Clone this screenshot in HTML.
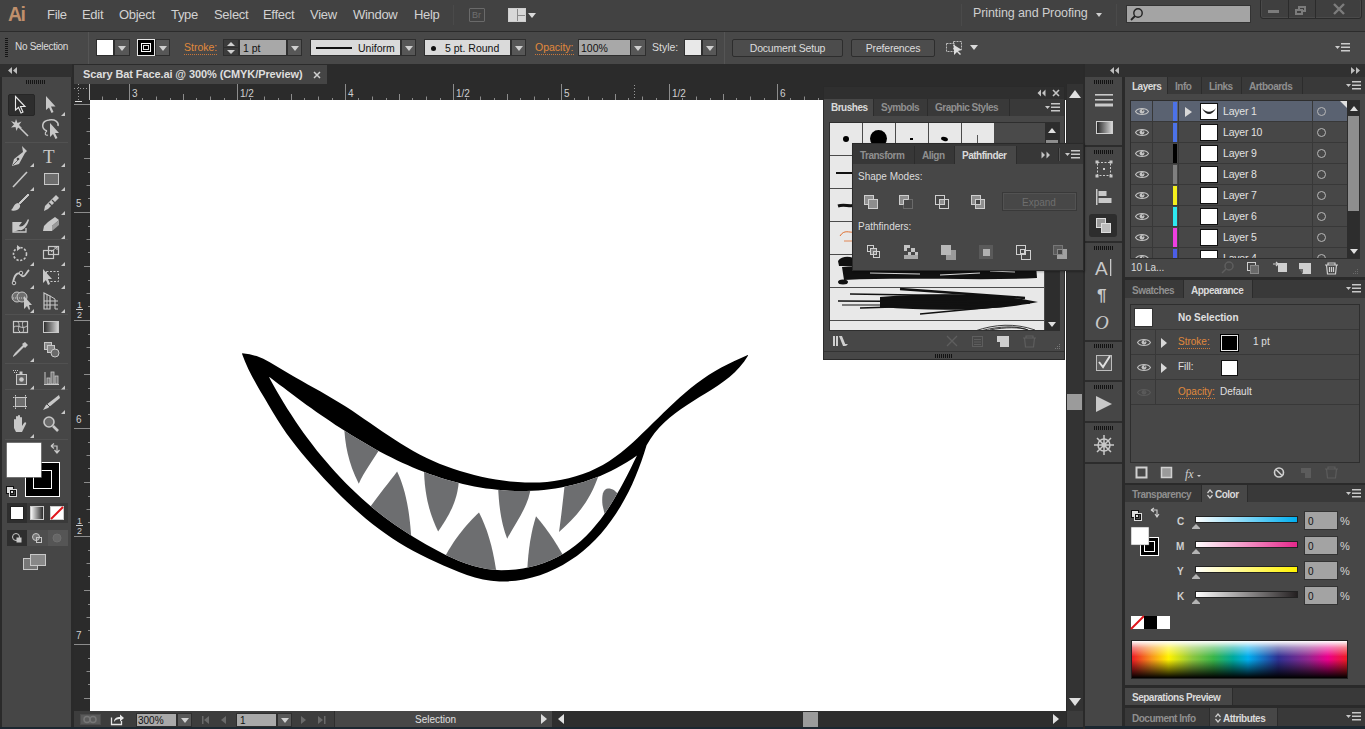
<!DOCTYPE html>
<html><head><meta charset="utf-8">
<style>
*{margin:0;padding:0;box-sizing:border-box}
html,body{width:1365px;height:729px;overflow:hidden;background:#2a2a2a;font-family:"Liberation Sans",sans-serif;color:#d6d6d6;font-size:11px}
.a{position:absolute}
.t{position:absolute;white-space:nowrap;line-height:1}
#menubar{left:0;top:0;width:1365px;height:31px;background:#424242}
#ctrl{left:0;top:31px;width:1365px;height:33px;background:#484848;border-top:1px solid #2c2c2c}
.dd{position:absolute;background:#575757;border:1px solid #2e2e2e}
.dd:after{content:"";position:absolute;left:50%;top:50%;margin-left:-4px;margin-top:-2px;border-left:4px solid transparent;border-right:4px solid transparent;border-top:5px solid #cfcfcf}
.mn{top:8px;font-size:13px;color:#d2d2d2;letter-spacing:-0.3px}
.orange{color:#e0893c;border-bottom:1px dotted #c9773a}
.btn{position:absolute;background:#4c4c4c;border:1px solid #2d2d2d;border-radius:2px;color:#dcdcdc;text-align:center;font-size:10.5px;letter-spacing:-0.2px}
.panel{position:absolute;background:#474747}
.hdr{position:absolute;background:#2e2e2e}
.tab{position:absolute;top:0;height:100%;color:#9a9a9a;font-size:11px;font-weight:bold;text-align:center;border-right:1px solid #3a3a3a}
.tab.on{background:#474747;color:#dcdcdc}
.grip{position:absolute;height:6px;background:repeating-linear-gradient(90deg,#151515 0 1px,transparent 1px 3px)}
</style></head><body>

<!-- MENU BAR -->
<div id="menubar" class="a">
  <div class="t" style="left:8px;top:3px;font-size:21px;font-weight:bold;color:#c0906c;letter-spacing:-1.5px;transform:scaleX(0.92);transform-origin:0 0">Ai</div>
  <div class="t mn" style="left:47px">File</div>
  <div class="t mn" style="left:82px">Edit</div>
  <div class="t mn" style="left:119px">Object</div>
  <div class="t mn" style="left:171px">Type</div>
  <div class="t mn" style="left:214px">Select</div>
  <div class="t mn" style="left:263px">Effect</div>
  <div class="t mn" style="left:310px">View</div>
  <div class="t mn" style="left:353px">Window</div>
  <div class="t mn" style="left:414px">Help</div>
  <div class="a" style="left:453px;top:5px;width:1px;height:20px;background:#2f2f2f;border-right:1px solid #4a4a4a"></div>
  <div class="a" style="left:469px;top:8px;width:16px;height:14px;border:1px solid #6a6a6a;border-radius:1px"><div class="t" style="left:2px;top:2px;font-size:9px;color:#6f6f6f">Br</div></div>
  <div class="a" style="left:508px;top:8px;width:18px;height:14px;border:1px solid #cfcfcf;background:#8a8a8a">
    <div class="a" style="left:0;top:0;width:8px;height:12px;background:#d8d8d8"></div>
    <div class="a" style="left:9px;top:0;width:7px;height:6px;background:#d8d8d8"></div>
    <div class="a" style="left:9px;top:7px;width:7px;height:5px;background:#d8d8d8"></div>
  </div>
  <div class="a" style="left:528px;top:13px;border-left:4px solid transparent;border-right:4px solid transparent;border-top:5px solid #dadada"></div>
  <div class="a" style="left:961px;top:4px;width:1px;height:22px;background:#2f2f2f;border-right:1px solid #4a4a4a"></div>
  <div class="t" style="left:973px;top:7px;font-size:12.5px;color:#cfcfcf;letter-spacing:-0.1px">Printing and Proofing</div>
  <div class="a" style="left:1096px;top:13px;border-left:3px solid transparent;border-right:3px solid transparent;border-top:4px solid #cfcfcf"></div>
  <div class="a" style="left:1116px;top:4px;width:1px;height:22px;background:#2f2f2f;border-right:1px solid #4a4a4a"></div>
  <div class="a" style="left:1126px;top:5px;width:125px;height:18px;background:#a4a4a4;border:1px solid #333">
    <svg class="a" style="left:2px;top:1px" width="16" height="15"><circle cx="9" cy="6" r="4.2" fill="none" stroke="#222" stroke-width="1.4"/><line x1="6" y1="9" x2="2" y2="13" stroke="#222" stroke-width="1.8"/></svg>
  </div>
  <div class="a" style="left:1260px;top:-2px;width:102px;height:21px;border:1px solid #2b2b2b;border-radius:3px;background:#3f3f3f;box-shadow:inset 0 0 0 1px #4a4a4a"></div>
  <div class="a" style="left:1288px;top:0;width:1px;height:19px;background:#2b2b2b"></div>
  <div class="a" style="left:1315px;top:0;width:1px;height:19px;background:#2b2b2b"></div>
  <div class="a" style="left:1268px;top:10px;width:11px;height:3px;background:#7c7c7c"></div>
  <div class="a" style="left:1298px;top:6px;width:8px;height:6px;border:2px solid #7c7c7c"></div>
  <div class="a" style="left:1295px;top:9px;width:8px;height:6px;border:2px solid #7c7c7c;background:#3f3f3f"></div>
  <svg class="a" style="left:1333px;top:3px" width="12" height="12"><path d="M1,1 L11,11 M11,1 L1,11" stroke="#7c7c7c" stroke-width="2.4"/></svg>
</div>

<!-- CONTROL BAR -->
<div id="ctrl" class="a">
  <div class="grip" style="left:5px;top:6px;width:3px;height:19px;background:repeating-linear-gradient(180deg,#151515 0 1px,transparent 1px 2px)"></div>
  <div class="t" style="left:15px;top:10px;font-size:10px;letter-spacing:-0.3px;color:#dcdcdc">No Selection</div>
  <div class="a" style="left:88px;top:0;width:1px;height:32px;background:#3a3a3a;border-right:1px solid #555"></div>
  <div class="a" style="left:96px;top:7px;width:18px;height:17px;background:#fff;border:1px solid #2e2e2e"></div>
  <div class="dd" style="left:114px;top:7px;width:16px;height:17px"></div>
  <div class="a" style="left:137px;top:7px;width:18px;height:17px;background:#000;border:1px solid #e6e6e6"><div class="a" style="left:3px;top:3px;width:10px;height:9px;border:1px solid #fff"></div><div class="a" style="left:5px;top:5px;width:6px;height:5px;border:1px solid #ddd;background:#000"></div></div>
  <div class="dd" style="left:155px;top:7px;width:15px;height:17px"></div>
  <div class="t orange" style="left:184px;top:10px;font-size:10.5px;padding-bottom:1px">Stroke:</div>
  <div class="a" style="left:223px;top:7px;width:16px;height:17px;background:#3c3c3c;border:1px solid #2e2e2e">
    <div class="a" style="left:3px;top:2px;border-left:4px solid transparent;border-right:4px solid transparent;border-bottom:4px solid #cfcfcf"></div>
    <div class="a" style="left:0;top:7px;width:14px;height:1px;background:#2e2e2e"></div>
    <div class="a" style="left:3px;top:10px;border-left:4px solid transparent;border-right:4px solid transparent;border-top:4px solid #cfcfcf"></div>
  </div>
  <div class="a" style="left:239px;top:7px;width:48px;height:17px;background:#a8a8a8;border:1px solid #2e2e2e"><div class="t" style="left:3px;top:3px;font-size:10.5px;color:#111">1 pt</div></div>
  <div class="dd" style="left:287px;top:7px;width:15px;height:17px"></div>
  <div class="a" style="left:310px;top:7px;width:91px;height:17px;background:#dadada;border:1px solid #2e2e2e">
    <div class="a" style="left:5px;top:7px;width:36px;height:2px;background:#111"></div>
    <div class="t" style="left:47px;top:3px;font-size:10.5px;color:#111">Uniform</div>
  </div>
  <div class="dd" style="left:401px;top:7px;width:15px;height:17px"></div>
  <div class="a" style="left:424px;top:7px;width:87px;height:17px;background:#dadada;border:1px solid #2e2e2e">
    <div class="a" style="left:6px;top:6px;width:5px;height:5px;border-radius:50%;background:#111"></div>
    <div class="t" style="left:20px;top:3px;font-size:10.5px;color:#111">5 pt. Round</div>
  </div>
  <div class="dd" style="left:511px;top:7px;width:15px;height:17px"></div>
  <div class="t orange" style="left:535px;top:10px;font-size:10.5px;padding-bottom:1px">Opacity:</div>
  <div class="a" style="left:578px;top:7px;width:53px;height:17px;background:#a8a8a8;border:1px solid #2e2e2e"><div class="t" style="left:2px;top:3px;font-size:10.5px;color:#111">100%</div></div>
  <div class="dd" style="left:630px;top:7px;width:16px;height:17px"></div>
  <div class="t" style="left:652px;top:10px;font-size:10.5px;color:#dcdcdc">Style:</div>
  <div class="a" style="left:684px;top:7px;width:18px;height:17px;background:#e8e8e8;border:1px solid #2e2e2e"></div>
  <div class="dd" style="left:702px;top:7px;width:15px;height:17px"></div>
  <div class="a" style="left:724px;top:0;width:1px;height:32px;background:#3a3a3a;border-right:1px solid #555"></div>
  <div class="btn" style="left:732px;top:7px;width:111px;height:18px;line-height:16px">Document Setup</div>
  <div class="btn" style="left:851px;top:7px;width:84px;height:18px;line-height:16px">Preferences</div>
  <svg class="a" style="left:945px;top:8px" width="22" height="16"><rect x="1.5" y="3.5" width="8" height="8" fill="none" stroke="#bbb" stroke-dasharray="2 1"/><rect x="8.5" y="1.5" width="8" height="8" fill="none" stroke="#bbb" stroke-dasharray="2 1"/><path d="M9,5 L9,15 L12,12 L15,15 L16,14 L13,11 L17,10 Z" fill="#ddd"/></svg>
  <div class="a" style="left:970px;top:13px;border-left:4px solid transparent;border-right:4px solid transparent;border-top:5px solid #dadada"></div>
  <svg class="a" style="left:1335px;top:10px" width="16" height="12"><path d="M0,4 L5,4 L2.5,7Z" fill="#ccc"/><rect x="6" y="1" width="9" height="1.5" fill="#ccc"/><rect x="6" y="4.5" width="9" height="1.5" fill="#ccc"/><rect x="6" y="8" width="9" height="1.5" fill="#ccc"/></svg>
</div>

<!-- TOOLS PANEL -->
<div class="a" style="left:0;top:64px;width:74px;height:665px;background:#2a2a2a"></div>
<div class="hdr" style="left:0;top:64px;width:72px;height:13px;background:#303030"></div>
<svg class="a" style="left:8px;top:67px" width="10" height="7"><path d="M4,0 L0,3.5 L4,7Z M9,0 L5,3.5 L9,7Z" fill="#bdbdbd"/></svg>
<div class="panel" style="left:2px;top:77px;width:69px;height:652px;background:#464646"></div>
<div class="grip" style="left:26px;top:80px;width:19px;height:4px;background:repeating-linear-gradient(90deg,#151515 0 1px,transparent 1px 2px)"></div>
<!--TOOLS-->
<div class="a" style="left:8px;top:94px;width:27px;height:22px;background:#2d2d2d;border:1px solid #262626;border-radius:2px"></div>
<div class="a" style="left:5px;top:142px;width:63px;height:1px;background:#3a3a3a;border-bottom:1px solid #515151"></div>
<div class="a" style="left:5px;top:239px;width:63px;height:1px;background:#3a3a3a;border-bottom:1px solid #515151"></div>
<div class="a" style="left:5px;top:314px;width:63px;height:1px;background:#3a3a3a;border-bottom:1px solid #515151"></div>
<div class="a" style="left:5px;top:363px;width:63px;height:1px;background:#3a3a3a;border-bottom:1px solid #515151"></div>
<div class="a" style="left:5px;top:389px;width:63px;height:1px;background:#3a3a3a;border-bottom:1px solid #515151"></div>
<div class="a" style="left:5px;top:439px;width:63px;height:1px;background:#3a3a3a;border-bottom:1px solid #515151"></div>
<svg class="a" style="left:0;top:0" width="74" height="600"><g fill="#c8c8c8" stroke="none"><path d="M65,112 V116 H61Z"/><path d="M34,163 V167 H30Z"/><path d="M65,163 V167 H61Z"/><path d="M34,187 V191 H30Z"/><path d="M65,187 V191 H61Z"/><path d="M65,211 V215 H61Z"/><path d="M65,235 V239 H61Z"/><path d="M34,262 V266 H30Z"/><path d="M65,262 V266 H61Z"/><path d="M34,285 V289 H30Z"/><path d="M65,285 V289 H61Z"/><path d="M34,309 V313 H30Z"/><path d="M65,309 V313 H61Z"/><path d="M34,358 V362 H30Z"/><path d="M34,385.5 V389.5 H30Z"/><path d="M65,385.5 V389.5 H61Z"/><path d="M65,410 V414 H61Z"/><path d="M34,434 V438 H30Z"/></g><path d="M15.5,96.5 V110 L18.5,107.5 L21,113 L23,112 L20.5,106.5 L25,106.5Z" fill="#2d2d2d" stroke="#e8e8e8" stroke-width="1.1"/><path d="M46,96 V110 L49,107.5 L51.5,113 L53.5,112 L51,106.5 L55.5,106.5Z" fill="#c8c8c8"/><g stroke="#c8c8c8" stroke-width="1.6"><path d="M17,125 L28,136"/></g><path d="M16,119 L17.5,123 L21.5,121.5 L19,125 L22,128 L18,127.5 L16.5,131 L15.5,127 L11,127.5 L14,124.5 L11,121 L15,122.5Z" fill="#c8c8c8"/><path d="M47,131 C41,129 41,121 49,120 C55,119 59,122 58,126" fill="none" stroke="#c8c8c8" stroke-width="1.5"/><path d="M47,131 C44,133 45,136 48,135" fill="none" stroke="#c8c8c8" stroke-width="1.1"/><path d="M50,123 V137 L53,134 L55.5,139 L57.5,138 L55,133 L59,133Z" fill="#c8c8c8"/><path d="M22,146 L27,151 L25,153 L19,164 L12,166 L14,159 L23,152Z" fill="#c8c8c8"/><circle cx="18" cy="159" r="1.3" fill="#474747"/><path d="M13,165 L18,160" stroke="#474747" stroke-width="0.8"/><text x="43" y="163" font-family="Liberation Serif" font-size="19" fill="#c8c8c8">T</text><path d="M13,187 L27,172" stroke="#c8c8c8" stroke-width="1.6"/><rect x="44.5" y="173.5" width="14" height="11" fill="#6d6d6d" stroke="#c8c8c8"/><path d="M28,194 L29,195 L20,204 L19,203Z" fill="#c8c8c8" stroke="#c8c8c8"/><path d="M18,203 C21,204 21,208 17,210 C15,211 12,211 11,210 C14,208 13,204 18,203Z" fill="#c8c8c8"/><path d="M56,195 L59,198 L48,209 L44,211 L45,206Z" fill="#c8c8c8"/><path d="M49,203 L52,206 M52,200 L55,203" stroke="#474747" stroke-width="1.2"/><path d="M13,222 H22 L19,226 C22,228 25,225 28,219 L29,220 C27,226 24,231 19,230 L13,232Z" fill="#c8c8c8"/><path d="M13,222 V232 H26 V228" fill="none" stroke="#c8c8c8" stroke-width="1.3"/><path d="M48,222 L55,217 L59,220 L52,226 H44Z" fill="#c8c8c8"/><path d="M44,226 H52 V231 H43Z" fill="#c8c8c8"/><path d="M52,226 L59,220 V225 L52,231Z" fill="#9a9a9a"/><circle cx="20" cy="254" r="6.5" fill="none" stroke="#c8c8c8" stroke-width="1.6" stroke-dasharray="2.2 1.6"/><path d="M17,245 L21,248 L17,251Z" fill="#c8c8c8"/><rect x="43.5" y="250.5" width="10" height="8" fill="none" stroke="#c8c8c8" stroke-width="1.2"/><rect x="48.5" y="246.5" width="10" height="8" fill="none" stroke="#c8c8c8" stroke-width="1.2"/><path d="M51,252 L57,247 M54,247 H57 V250" stroke="#c8c8c8" stroke-width="1" fill="none"/><path d="M13,283 C14,275 18,271 21,275 C24,279 26,273 29,270" fill="none" stroke="#c8c8c8" stroke-width="1.8"/><circle cx="14" cy="283" r="1.8" fill="#474747" stroke="#c8c8c8"/><circle cx="21" cy="273" r="1.8" fill="#474747" stroke="#c8c8c8"/><rect x="46.5" y="271.5" width="12" height="10" fill="none" stroke="#c8c8c8" stroke-dasharray="2 1.5"/><path d="M43,269 V283 L46,280 L48,285 L50,284 L48,279 L52,279Z" fill="#c8c8c8"/><circle cx="17" cy="297" r="5" fill="#6e6e6e" stroke="#c8c8c8"/><circle cx="22" cy="297" r="5" fill="#6e6e6e" stroke="#c8c8c8"/><path d="M13,298 H24" stroke="#c8c8c8" stroke-dasharray="1 1"/><path d="M24,296 V309 L27,306 L29,310 L30,309 L29,305 L32,305Z" fill="#c8c8c8"/><path d="M44,293 L50,296 V309 H44Z" fill="none" stroke="#c8c8c8" stroke-width="1.2"/><path d="M50,296 L55,299 V309 M44,301 H58 M44,305 H58 M47,294 V309 M55,309 H58" fill="none" stroke="#c8c8c8" stroke-width="1"/><rect x="13.5" y="321.5" width="14" height="11" fill="none" stroke="#c8c8c8" stroke-width="1.2"/><path d="M14,327 C18,324 22,330 27,326 M18,322 C21,326 16,329 20,332 M23,322 C21,325 25,329 23,332" fill="none" stroke="#c8c8c8"/><defs><linearGradient id="tg" x1="0" x2="1"><stop offset="0" stop-color="#2a2a2a"/><stop offset="1" stop-color="#d8d8d8"/></linearGradient></defs><rect x="43.5" y="321.5" width="15" height="11" fill="url(#tg)" stroke="#c8c8c8"/><path d="M25,342 L28,345 L25,348 L24,347 L16,355 L13,357 L13,356 L15,353 L23,345 L22,344Z" fill="#c8c8c8"/><rect x="44.5" y="342.5" width="7" height="7" fill="#888" stroke="#c8c8c8"/><rect x="47.5" y="345.5" width="7" height="7" fill="#888" stroke="#c8c8c8"/><circle cx="55" cy="353" r="4" fill="#6a6a6a" stroke="#c8c8c8"/><g fill="#c8c8c8"><rect x="13" y="370" width="1" height="1"/><rect x="15" y="370" width="1" height="1"/><rect x="17" y="370" width="1" height="1"/><rect x="14" y="372" width="1" height="1"/><rect x="16" y="372" width="1" height="1"/></g><rect x="19.5" y="371.5" width="3" height="3" fill="#c8c8c8"/><rect x="16.5" y="374.5" width="10" height="10" fill="#5e5e5e" stroke="#c8c8c8"/><circle cx="21.5" cy="379.5" r="2.3" fill="#c8c8c8"/><path d="M44,384.5 H59 M45,372 V384" stroke="#c8c8c8" stroke-width="1"/><rect x="47" y="378" width="3" height="6" fill="#777" stroke="#c8c8c8" stroke-width="0.8"/><rect x="51" y="372" width="3" height="12" fill="#777" stroke="#c8c8c8" stroke-width="0.8"/><rect x="55" y="376" width="3" height="8" fill="#777" stroke="#c8c8c8" stroke-width="0.8"/><rect x="15.5" y="397.5" width="10" height="9" fill="#6e6e6e" stroke="#c8c8c8"/><path d="M13,397.5 H28 M13,406.5 H28 M15.5,395 V409 M25.5,395 V409" stroke="#c8c8c8" stroke-dasharray="1.5 1"/><path d="M59,395 L46,405 L43,410 L48,408 L60,398Z" fill="#c8c8c8"/><path d="M47,404 L50,407" stroke="#474747"/><path d="M14,428 V420 C14,418.5 16,418.5 16,420 V425 V417 C16,415.5 18,415.5 18,417 V424 V416 C18,414.5 20,414.5 20,416 V424 V418 C20,416.5 22,416.5 22,418 V426 L24,423 C25,421.5 27,422.5 26,424 L22,432 H16Z" fill="#c8c8c8"/><circle cx="49" cy="422" r="5" fill="#6a6a6a" stroke="#c8c8c8" stroke-width="1.6"/><path d="M53,426 L58,431" stroke="#c8c8c8" stroke-width="2.6"/><rect x="25.5" y="462.5" width="34" height="34" fill="#000" stroke="#fff"/><rect x="33.5" y="470.5" width="18" height="18" fill="none" stroke="#fff"/><rect x="6.5" y="442.5" width="35" height="35" fill="#fff" stroke="#444" stroke-width="0.5"/><path d="M51,446 L54,443.5 M51,446 L54,448.5 M51,446 H57 V452 M54.5,450 L57,453 L59.5,450" fill="none" stroke="#c8c8c8" stroke-width="1.2"/><rect x="6.5" y="486.5" width="7" height="7" fill="#ddd" stroke="#111"/><rect x="9.5" y="489.5" width="7" height="7" fill="none" stroke="#ddd"/><rect x="10.5" y="490.5" width="5" height="5" fill="none" stroke="#111"/><rect x="7" y="503" width="61" height="20" fill="#3a3a3a"/><rect x="7" y="503" width="20" height="20" fill="#2e2e2e"/><rect x="10.5" y="506.5" width="13" height="13" fill="#fff" stroke="#222"/><defs><linearGradient id="tg2" x1="0" x2="1"><stop offset="0" stop-color="#fff"/><stop offset="1" stop-color="#222"/></linearGradient></defs><rect x="30.5" y="506.5" width="13" height="13" fill="url(#tg2)" stroke="#ccc"/><rect x="50.5" y="506.5" width="13" height="13" fill="#fff" stroke="#ccc"/><path d="M51,519 L63,507" stroke="#e0151b" stroke-width="2"/><rect x="7" y="530" width="61" height="16" fill="#4e4e4e"/><rect x="7" y="530" width="20" height="16" fill="#2e2e2e"/><rect x="48" y="530" width="20" height="16" fill="#555"/><circle cx="16" cy="537" r="3.5" fill="none" stroke="#c8c8c8"/><rect x="16.5" y="537.5" width="5" height="5" fill="#c8c8c8"/><circle cx="36" cy="537" r="3.5" fill="#777" stroke="#c8c8c8"/><rect x="36.5" y="537.5" width="5" height="5" fill="none" stroke="#c8c8c8"/><circle cx="57" cy="538" r="4" fill="#666" stroke="#6e6e6e"/><rect x="23.5" y="558.5" width="14" height="11" fill="#777" stroke="#c8c8c8"/><rect x="30.5" y="554.5" width="15" height="11" fill="#888" stroke="#c8c8c8"/></svg>
<!--/TOOLS-->

<!-- DOC TAB BAR -->
<div class="a" style="left:74px;top:64px;width:1011px;height:20px;background:#2b2b2b"></div>
<div class="a" style="left:74px;top:65px;width:253px;height:19px;background:#454545">
  <div class="t" style="left:9px;top:4px;font-size:11px;font-weight:bold;letter-spacing:-0.1px;color:#dedede">Scary Bat Face.ai @ 300% (CMYK/Preview)</div>
  <svg class="a" style="left:239px;top:6px" width="8" height="8"><path d="M1,1 L7,7 M7,1 L1,7" stroke="#d0d0d0" stroke-width="1.5"/></svg>
</div>

<!-- RULERS -->
<div class="a" style="left:74px;top:84px;width:992px;height:16px;background:#2b2b2b"></div>
<div class="a" style="left:74px;top:100px;width:16px;height:611px;background:#2b2b2b"></div>
<div class="a" style="left:74px;top:84px;width:16px;height:16px;background:#2b2b2b"></div>
<svg class="a" style="left:74px;top:84px" width="16" height="16"><path d="M0,4.5H16 M4.5,0V16" stroke="#9a9a9a" stroke-dasharray="1 2"/><path d="M15.5,0V16" stroke="#bbb"/></svg>
<svg class="a" style="left:0;top:0" width="1365" height="729"><g stroke="#8c8c8c" stroke-width="1"><path d="M102.5,96.5V100 M116.5,98V100 M129.5,84V100 M142.5,98V100 M156.5,96.5V100 M170.5,98V100 M183.5,94V100 M196.5,98V100 M210.5,96.5V100 M224.5,98V100 M237.5,84V100 M250.5,98V100 M264.5,96.5V100 M278.5,98V100 M291.5,94V100 M304.5,98V100 M318.5,96.5V100 M332.5,98V100 M345.5,84V100 M358.5,98V100 M372.5,96.5V100 M386.5,98V100 M399.5,94V100 M412.5,98V100 M426.5,96.5V100 M440.5,98V100 M453.5,84V100 M466.5,98V100 M480.5,96.5V100 M494.5,98V100 M507.5,94V100 M520.5,98V100 M534.5,96.5V100 M548.5,98V100 M561.5,84V100 M574.5,98V100 M588.5,96.5V100 M602.5,98V100 M615.5,94V100 M628.5,98V100 M642.5,96.5V100 M656.5,98V100 M669.5,84V100 M682.5,98V100 M696.5,96.5V100 M710.5,98V100 M723.5,94V100 M736.5,98V100 M750.5,96.5V100 M764.5,98V100 M777.5,84V100 M790.5,98V100 M804.5,96.5V100 M818.5,98V100 M831.5,94V100 M844.5,98V100 M858.5,96.5V100 M872.5,98V100 M885.5,84V100 M898.5,98V100 M912.5,96.5V100 M926.5,98V100 M939.5,94V100 M952.5,98V100 M966.5,96.5V100 M980.5,98V100 M993.5,84V100 M1006.5,98V100 M1020.5,96.5V100 M1034.5,98V100 M1047.5,94V100 M1060.5,98V100"/></g><g fill="#cfcfcf" font-size="10" font-family="Liberation Sans"><text x="132" y="97">3</text><text x="240" y="97">1/2</text><text x="348" y="97">4</text><text x="456" y="97">1/2</text><text x="564" y="97">5</text><text x="672" y="97">1/2</text><text x="780" y="97">6</text><text x="888" y="97">1/2</text><text x="996" y="97">7</text></g><g stroke="#8c8c8c" stroke-width="1"><path d="M74,104.5H90 M88,118.5H90 M86.5,131.5H90 M88,144.5H90 M84,158.5H90 M88,172.5H90 M86.5,185.5H90 M88,198.5H90 M74,212.5H90 M88,226.5H90 M86.5,239.5H90 M88,252.5H90 M84,266.5H90 M88,280.5H90 M86.5,293.5H90 M88,306.5H90 M74,320.5H90 M88,334.5H90 M86.5,347.5H90 M88,360.5H90 M84,374.5H90 M88,388.5H90 M86.5,401.5H90 M88,414.5H90 M74,428.5H90 M88,442.5H90 M86.5,455.5H90 M88,468.5H90 M84,482.5H90 M88,496.5H90 M86.5,509.5H90 M88,522.5H90 M74,536.5H90 M88,550.5H90 M86.5,563.5H90 M88,576.5H90 M84,590.5H90 M88,604.5H90 M86.5,617.5H90 M88,630.5H90 M74,644.5H90 M88,658.5H90 M86.5,671.5H90 M88,684.5H90 M84,698.5H90"/></g><g fill="#cfcfcf" font-size="10" font-family="Liberation Sans"><text x="76" y="207">5</text><text x="77" y="308" font-size="9">1</text><path d="M76,309.5H83" stroke="#cfcfcf"/><text x="77" y="318" font-size="9">2</text><text x="76" y="423">6</text><text x="77" y="524" font-size="9">1</text><path d="M76,525.5H83" stroke="#cfcfcf"/><text x="77" y="534" font-size="9">2</text><text x="76" y="639">7</text></g></svg>

<div class="a" style="left:634px;top:85px;width:1px;height:15px;background:repeating-linear-gradient(180deg,#9a9a9a 0 1px,transparent 1px 3px)"></div>
<div class="a" style="left:823px;top:84px;width:243px;height:2px;background:#2b2b2b"></div>
<div class="a" style="left:75px;top:101px;width:7px;height:1px;background:#ddd"></div>
<!-- ARTBOARD -->
<div class="a" style="left:90px;top:100px;width:976px;height:611px;background:#fff"></div>
<!--MOUTH--><svg class="a" style="left:0;top:0" width="1365" height="729">
<defs><clipPath id="inn"><path d="M269.8,377.3 274.3,380.7 278.8,384.2 283.4,387.6 287.9,391.1 292.6,394.5 297.2,398.0 301.9,401.4 306.6,404.9 311.4,408.3 316.1,411.7 320.9,415.0 325.8,418.3 330.6,421.6 335.5,424.9 340.4,428.1 345.4,431.3 350.4,434.5 355.4,437.6 360.5,440.6 365.6,443.6 370.7,446.5 375.8,449.4 381.0,452.2 386.3,454.9 391.5,457.6 396.8,460.2 402.1,462.7 407.5,465.1 412.9,467.4 418.3,469.7 423.7,471.8 429.2,473.9 434.8,475.8 440.3,477.7 445.9,479.4 451.5,481.0 457.2,482.6 462.9,484.0 468.6,485.2 474.3,486.4 480.1,487.4 485.9,488.4 491.7,489.1 497.5,489.8 503.3,490.3 509.1,490.7 514.9,490.9 520.7,491.0 526.5,491.0 532.3,490.8 538.1,490.4 543.9,489.9 549.6,489.3 555.4,488.5 561.1,487.5 566.8,486.3 572.4,485.0 578.1,483.5 583.7,481.9 589.2,480.1 594.7,478.1 600.2,475.9 605.6,473.5 611.0,471.0 616.3,468.2 621.6,465.3 626.8,462.2 632.0,458.9 637.0,455.4 636.6,456.3 633.5,462.6 630.4,468.9 627.2,475.3 623.8,481.8 620.3,488.2 616.7,494.6 612.9,501.0 609.0,507.3 604.8,513.4 600.5,519.4 595.9,525.1 591.1,530.7 586.1,535.9 580.8,540.9 575.3,545.5 569.5,549.8 563.4,553.7 557.0,557.2 550.5,560.3 543.8,563.0 536.9,565.3 530.0,567.1 522.9,568.6 515.7,569.6 508.5,570.1 501.3,570.2 494.1,569.8 486.9,569.0 479.9,567.6 472.8,565.8 465.9,563.6 459.1,561.0 452.3,558.1 445.7,554.9 439.1,551.6 432.6,548.1 426.1,544.5 419.8,540.8 413.5,537.0 407.3,533.1 401.2,529.1 395.2,525.0 389.3,520.8 383.5,516.5 377.8,512.0 372.2,507.5 366.7,502.8 361.3,498.0 356.0,493.1 350.7,488.1 345.6,483.0 340.6,477.8 335.7,472.5 330.8,467.1 326.1,461.6 321.4,456.0 316.8,450.4 312.3,444.6 307.9,438.8 303.6,432.9 299.4,426.9 295.3,420.9 291.3,414.8 287.3,408.7 283.5,402.5 279.8,396.3 276.1,390.0 272.6,383.7 269.1,377.3Z"/></clipPath></defs>
<path fill="#000" d="M242.3,353.3 249.6,354.2 256.6,356.1 263.3,358.8 269.8,362.2 276.1,365.9 282.4,369.7 288.7,373.5 295.1,377.2 301.4,380.8 307.8,384.4 314.2,388.0 320.6,391.6 326.9,395.2 333.2,398.9 339.5,402.7 345.7,406.6 351.9,410.6 358.0,414.7 364.1,418.9 370.1,423.0 376.2,427.2 382.3,431.4 388.4,435.5 394.5,439.6 400.7,443.5 406.9,447.3 413.2,451.0 419.6,454.5 426.1,457.7 432.7,460.8 439.4,463.7 446.2,466.3 453.1,468.8 460.0,471.0 467.1,473.1 474.2,475.0 481.3,476.7 488.5,478.2 495.8,479.5 503.0,480.6 510.3,481.5 517.7,482.1 525.0,482.5 532.3,482.6 539.7,482.4 547.0,481.9 554.2,481.0 561.5,479.8 568.7,478.3 575.8,476.3 582.8,474.0 589.6,471.4 596.3,468.3 602.8,464.9 609.0,461.2 615.0,457.1 620.8,452.7 626.5,448.0 632.0,443.2 637.4,438.2 642.7,433.1 648.0,428.0 653.2,422.8 658.5,417.7 663.7,412.5 669.0,407.4 674.3,402.4 679.7,397.5 685.2,392.7 690.8,388.0 696.6,383.5 702.5,379.2 708.6,375.1 714.8,371.3 721.3,367.6 727.8,364.2 734.4,361.0 741.1,358.0 747.8,355.1 748.1,355.4 744.2,361.5 739.7,367.1 734.8,372.2 729.5,376.9 723.9,381.3 718.0,385.5 711.9,389.4 705.8,393.3 699.5,397.1 693.3,400.9 687.1,404.9 681.1,409.0 675.3,413.2 669.6,417.7 664.3,422.5 659.3,427.6 654.6,433.1 650.4,439.0 646.6,445.3 646.5,445.4 644.1,453.2 641.5,461.0 638.6,468.8 635.5,476.5 632.2,484.2 628.6,491.7 624.7,499.1 620.5,506.4 616.1,513.5 611.4,520.3 606.4,527.0 601.1,533.4 595.5,539.5 589.6,545.3 583.4,550.8 576.8,555.9 569.9,560.6 562.8,564.9 555.4,568.8 547.8,572.2 540.0,575.2 532.0,577.6 523.9,579.4 515.8,580.7 507.6,581.4 499.4,581.4 491.1,580.8 483.0,579.5 474.9,577.5 466.9,575.0 459.0,572.0 451.2,568.8 443.4,565.4 435.8,562.0 428.2,558.4 420.7,554.8 413.4,550.9 406.2,546.9 399.1,542.7 392.1,538.2 385.3,533.6 378.7,528.7 372.1,523.7 365.6,518.5 359.3,513.1 353.1,507.5 346.9,501.8 340.9,496.0 335.0,490.1 329.2,484.1 323.5,478.0 317.9,471.8 312.3,465.6 306.9,459.3 301.6,453.0 296.4,446.6 291.4,440.0 286.5,433.4 281.8,426.6 277.3,419.6 273.0,412.5 268.7,405.3 264.5,398.1 260.2,390.9 256.1,383.7 252.1,376.4 248.3,369.1 245.0,361.5 242.0,353.8Z"/>
<path fill="#fff" d="M269.8,377.3 274.3,380.7 278.8,384.2 283.4,387.6 287.9,391.1 292.6,394.5 297.2,398.0 301.9,401.4 306.6,404.9 311.4,408.3 316.1,411.7 320.9,415.0 325.8,418.3 330.6,421.6 335.5,424.9 340.4,428.1 345.4,431.3 350.4,434.5 355.4,437.6 360.5,440.6 365.6,443.6 370.7,446.5 375.8,449.4 381.0,452.2 386.3,454.9 391.5,457.6 396.8,460.2 402.1,462.7 407.5,465.1 412.9,467.4 418.3,469.7 423.7,471.8 429.2,473.9 434.8,475.8 440.3,477.7 445.9,479.4 451.5,481.0 457.2,482.6 462.9,484.0 468.6,485.2 474.3,486.4 480.1,487.4 485.9,488.4 491.7,489.1 497.5,489.8 503.3,490.3 509.1,490.7 514.9,490.9 520.7,491.0 526.5,491.0 532.3,490.8 538.1,490.4 543.9,489.9 549.6,489.3 555.4,488.5 561.1,487.5 566.8,486.3 572.4,485.0 578.1,483.5 583.7,481.9 589.2,480.1 594.7,478.1 600.2,475.9 605.6,473.5 611.0,471.0 616.3,468.2 621.6,465.3 626.8,462.2 632.0,458.9 637.0,455.4 636.6,456.3 633.5,462.6 630.4,468.9 627.2,475.3 623.8,481.8 620.3,488.2 616.7,494.6 612.9,501.0 609.0,507.3 604.8,513.4 600.5,519.4 595.9,525.1 591.1,530.7 586.1,535.9 580.8,540.9 575.3,545.5 569.5,549.8 563.4,553.7 557.0,557.2 550.5,560.3 543.8,563.0 536.9,565.3 530.0,567.1 522.9,568.6 515.7,569.6 508.5,570.1 501.3,570.2 494.1,569.8 486.9,569.0 479.9,567.6 472.8,565.8 465.9,563.6 459.1,561.0 452.3,558.1 445.7,554.9 439.1,551.6 432.6,548.1 426.1,544.5 419.8,540.8 413.5,537.0 407.3,533.1 401.2,529.1 395.2,525.0 389.3,520.8 383.5,516.5 377.8,512.0 372.2,507.5 366.7,502.8 361.3,498.0 356.0,493.1 350.7,488.1 345.6,483.0 340.6,477.8 335.7,472.5 330.8,467.1 326.1,461.6 321.4,456.0 316.8,450.4 312.3,444.6 307.9,438.8 303.6,432.9 299.4,426.9 295.3,420.9 291.3,414.8 287.3,408.7 283.5,402.5 279.8,396.3 276.1,390.0 272.6,383.7 269.1,377.3Z"/>
<g clip-path="url(#inn)" fill="#6d6e70"><path d="M344,424 C345,445 348,462 358.8,483.7 C364,472 373,460 383,444Z"/><path d="M424,466 C424,495 430,515 438.1,531.4 C448,517 458,502 459,478Z"/><path d="M498,485 C499,510 502,525 507.2,538.7 C516,522 529,506 531,486Z"/><path d="M565,482 C563,500 561,518 559,532 C575,518 590,502 599,474Z"/><path d="M602.5,505 C601.5,495 603,489 608,488.5 C613,488.5 616,491 618,495 L606,520Z"/><path d="M360,522 C374,500 388,484 397.1,471.4 C404,486 410,505 412,550Z"/><path d="M437,572 C452,540 466,525 479,512.4 C488,530 494,550 498,584Z"/><path d="M527,584 C527,558 530,535 536,516.2 C548,530 558,545 570,568Z"/></g>
</svg><!--/MOUTH-->


<!-- V SCROLL -->
<div class="a" style="left:1066px;top:84px;width:19px;height:645px;background:#2a2a2a"></div>
<div class="a" style="left:1067px;top:84px;width:16px;height:627px;background:#333"></div>
<div class="a" style="left:1069px;top:90px;border-left:6px solid transparent;border-right:6px solid transparent;border-bottom:8px solid #e0e0e0"></div>
<div class="a" style="left:1067px;top:394px;width:15px;height:16px;background:#9b9b9b"></div>
<div class="a" style="left:1069px;top:698px;border-left:6px solid transparent;border-right:6px solid transparent;border-top:8px solid #e0e0e0"></div>
<!-- STATUS BAR -->
<div class="a" style="left:74px;top:711px;width:992px;height:18px;background:#3a3a3a"></div>
<div class="a" style="left:74px;top:711px;width:260px;height:16px;background:#3d3d3d"></div>
<svg class="a" style="left:80px;top:714px" width="22" height="11"><rect x="0.5" y="0.5" width="20" height="10" fill="#5a5a5a" stroke="#4d4d4d"/><circle cx="7" cy="5.5" r="3" fill="none" stroke="#767676" stroke-width="1.5"/><circle cx="13" cy="5.5" r="3" fill="none" stroke="#767676" stroke-width="1.5"/></svg>
<svg class="a" style="left:110px;top:713px" width="15" height="13"><path d="M1.5,4.5V11.5H11.5V8" fill="none" stroke="#e6e6e6" stroke-width="1.3"/><path d="M4,9 C4,5 7,4 10,4 V1.5 L14,5 L10,8.5 V6 C7,6 5,7 4,9Z" fill="#e6e6e6"/></svg>
<div class="a" style="left:136px;top:713px;width:41px;height:14px;background:#a9a9a9;border:1px solid #2e2e2e"><div class="t" style="left:1px;top:2px;font-size:10px;color:#111">300%</div></div>
<div class="dd" style="left:177px;top:713px;width:15px;height:14px;background:#585858"></div>
<svg class="a" style="left:200px;top:715px" width="130" height="10" fill="#6a6a6a"><path d="M2,1V9H3.5V1Z M9,1 L4,5 L9,9Z M26,1 L21,5 L26,9Z"/><path d="M101,1 L106,5 L101,9Z M118,1 L123,5 L118,9Z M124,1V9H125.5V1Z"/></svg>
<div class="a" style="left:236px;top:713px;width:41px;height:14px;background:#a9a9a9;border:1px solid #2e2e2e"><div class="t" style="left:3px;top:2px;font-size:10px;color:#111">1</div></div>
<div class="dd" style="left:277px;top:713px;width:15px;height:14px;background:#585858"></div>
<div class="a" style="left:334px;top:711px;width:218px;height:16px;background:#474747;border-left:1px solid #2e2e2e"></div>
<div class="t" style="left:415px;top:715px;font-size:10px;color:#e0e0e0">Selection</div>
<div class="a" style="left:541px;top:714px;border-top:5px solid transparent;border-bottom:5px solid transparent;border-left:6px solid #dcdcdc"></div>
<div class="a" style="left:552px;top:711px;width:514px;height:16px;background:#2e2e2e"></div>
<div class="a" style="left:558px;top:714px;border-top:5px solid transparent;border-bottom:5px solid transparent;border-right:6px solid #e0e0e0"></div>
<div class="a" style="left:803px;top:712px;width:15px;height:15px;background:#9b9b9b"></div>
<div class="a" style="left:1053px;top:714px;border-top:5px solid transparent;border-bottom:5px solid transparent;border-left:6px solid #e0e0e0"></div>
<div class="a" style="left:1067px;top:711px;width:16px;height:16px;background:#3c3c3c"></div>
<div class="a" style="left:0;top:727px;width:1365px;height:2px;background:#1c2730"></div>

<!-- RIGHT DOCK -->
<div class="a" style="left:1083px;top:64px;width:282px;height:665px;background:#2a2a2a"></div>
<div class="a" style="left:1085px;top:64px;width:280px;height:13px;background:#303030"></div>
<svg class="a" style="left:1110px;top:67px" width="10" height="7"><path d="M4,0 L0,3.5 L4,7Z M9,0 L5,3.5 L9,7Z" fill="#bdbdbd"/></svg>
<svg class="a" style="left:1351px;top:67px" width="10" height="7"><path d="M0,0 L4,3.5 L0,7Z M5,0 L9,3.5 L5,7Z" fill="#bdbdbd"/></svg>
<div class="a" style="left:1085px;top:77px;width:37px;height:652px;background:#464646"></div>
<div class="a" style="left:1085px;top:145px;width:37px;height:2px;background:#2c2c2c"></div>
<div class="a" style="left:1085px;top:241px;width:37px;height:2px;background:#2c2c2c"></div>
<div class="a" style="left:1085px;top:340px;width:37px;height:2px;background:#2c2c2c"></div>
<div class="a" style="left:1085px;top:380px;width:37px;height:2px;background:#2c2c2c"></div>
<div class="a" style="left:1085px;top:421px;width:37px;height:2px;background:#2c2c2c"></div>
<div class="a" style="left:1085px;top:462px;width:37px;height:2px;background:#2c2c2c"></div>
<div class="grip" style="left:1094px;top:80px;width:19px;height:4px;background:repeating-linear-gradient(90deg,#121212 0 1px,transparent 1px 2px)"></div>
<div class="grip" style="left:1094px;top:150px;width:19px;height:4px;background:repeating-linear-gradient(90deg,#121212 0 1px,transparent 1px 2px)"></div>
<div class="grip" style="left:1094px;top:246px;width:19px;height:4px;background:repeating-linear-gradient(90deg,#121212 0 1px,transparent 1px 2px)"></div>
<div class="grip" style="left:1094px;top:344px;width:19px;height:4px;background:repeating-linear-gradient(90deg,#121212 0 1px,transparent 1px 2px)"></div>
<div class="grip" style="left:1094px;top:385px;width:19px;height:4px;background:repeating-linear-gradient(90deg,#121212 0 1px,transparent 1px 2px)"></div>
<div class="grip" style="left:1094px;top:426px;width:19px;height:4px;background:repeating-linear-gradient(90deg,#121212 0 1px,transparent 1px 2px)"></div>
<svg class="a" style="left:1085px;top:77px" width="37" height="400">
<g fill="#c9c9c9">
<rect x="10" y="17" width="18" height="1.6"/><rect x="10" y="22" width="18" height="1.6"/><rect x="10" y="26.5" width="18" height="3"/>
</g>
<defs><linearGradient id="dg" x1="0" x2="1"><stop offset="0" stop-color="#222"/><stop offset="1" stop-color="#ddd"/></linearGradient></defs>
<rect x="11.5" y="44.5" width="16" height="12" fill="url(#dg)" stroke="#d0d0d0"/>
<g fill="none" stroke="#c9c9c9" stroke-dasharray="2 1.5"><rect x="12.5" y="85.5" width="13" height="13"/></g>
<g fill="#c9c9c9"><rect x="10.5" y="83.5" width="3" height="3"/><rect x="24.5" y="83.5" width="3" height="3"/><rect x="10.5" y="97.5" width="3" height="3"/><rect x="24.5" y="97.5" width="3" height="3"/><rect x="18" y="91" width="2" height="2"/></g>
<rect x="11" y="112" width="1.5" height="16" fill="#c9c9c9"/><rect x="13.5" y="114" width="8" height="5" fill="#c9c9c9"/><rect x="13.5" y="121" width="13" height="5" fill="#c9c9c9"/>
<rect x="4" y="137" width="28" height="23" rx="3" fill="#2d2d2d"/>
<rect x="11.5" y="141.5" width="9" height="9" fill="#9a9a9a" stroke="#dedede"/><rect x="16.5" y="146.5" width="9" height="9" fill="#bdbdbd" stroke="#dedede"/>
<text x="10" y="198" font-size="19" font-family="Liberation Sans" fill="#c9c9c9">A</text><rect x="25" y="182" width="1.3" height="17" fill="#c9c9c9"/>
<text x="12" y="224" font-size="17" font-weight="bold" font-family="Liberation Sans" fill="#c9c9c9">¶</text>
<text x="10" y="252" font-size="19" font-style="italic" font-family="Liberation Serif" fill="#c9c9c9">O</text>
<rect x="11.5" y="278.5" width="15" height="15" fill="#5a5a5a" stroke="#bdbdbd"/><path d="M14,285 L18,290 L25,279" fill="none" stroke="#e0e0e0" stroke-width="2"/>
<path d="M11,319 L11,335 L27,327Z" fill="#c9c9c9"/>
<g stroke="#c9c9c9" stroke-width="1.5" fill="none"><circle cx="19" cy="368" r="6"/><path d="M19,358V378 M9,368H29 M12,361L26,375 M26,361L12,375"/></g><circle cx="19" cy="368" r="2.5" fill="#c9c9c9"/>
</svg>
<div class="a" style="left:1125px;top:77px;width:240px;height:200px;background:#474747"></div>
<div class="a" style="left:1125px;top:77px;width:240px;height:17px;background:#393939"></div>
<div class="a" style="left:1125px;top:77px;width:43px;height:17px;background:#474747;border-right:1px solid #2c2c2c"><div class="t" style="left:7px;top:5px;font-size:10px;font-weight:bold;letter-spacing:-0.5px;color:#dadada">Layers</div></div><div class="a" style="left:1168px;top:77px;width:34px;height:17px;background:transparent;border-right:1px solid #2c2c2c"><div class="t" style="left:7px;top:5px;font-size:10px;font-weight:bold;letter-spacing:-0.5px;color:#8f8f8f">Info</div></div><div class="a" style="left:1202px;top:77px;width:40px;height:17px;background:transparent;border-right:1px solid #2c2c2c"><div class="t" style="left:7px;top:5px;font-size:10px;font-weight:bold;letter-spacing:-0.5px;color:#8f8f8f">Links</div></div><div class="a" style="left:1242px;top:77px;width:61px;height:17px;background:transparent;border-right:1px solid #2c2c2c"><div class="t" style="left:7px;top:5px;font-size:10px;font-weight:bold;letter-spacing:-0.5px;color:#8f8f8f">Artboards</div></div>
<svg class="a" style="left:1346px;top:81px" width="16" height="11"><path d="M0,3 L5,3 L2.5,6Z" fill="#c8c8c8"/><rect x="6" y="0" width="9" height="1.5" fill="#c8c8c8"/><rect x="6" y="3.5" width="9" height="1.5" fill="#c8c8c8"/><rect x="6" y="7" width="9" height="1.5" fill="#c8c8c8"/></svg>
<div class="a" style="left:1130px;top:100px;width:230px;height:159px;background:#474747;border:1px solid #2e2e2e;overflow:hidden">
<div class="a" style="left:0;top:0px;width:216px;height:21px;background:#5a6271;border-bottom:1px solid #383838">
<div class="a" style="left:21px;top:0;width:1px;height:21px;background:#383838"></div>
<div class="a" style="left:42px;top:1px;width:4px;height:19px;background:#4c72e8"></div><div class="a" style="left:47px;top:0;width:1px;height:21px;background:#383838"></div>
<svg class="a" style="left:4px;top:6px" width="14" height="9"><path d="M0.5,4.5 C3,0.5 11,0.5 13.5,4.5 C11,8.5 3,8.5 0.5,4.5Z" fill="none" stroke="#c4c4c4" stroke-width="1.1"/><circle cx="7" cy="4.3" r="2.4" fill="#c4c4c4"/><circle cx="7.8" cy="3.6" r="0.8" fill="#555"/></svg>
<div class="a" style="left:54px;top:6px;border-top:5px solid transparent;border-bottom:5px solid transparent;border-left:7px solid #d8d8d8"></div>
<div class="a" style="left:69px;top:2px;width:18px;height:17px;background:#fff;border:1px solid #111"></div>
<svg class="a" style="left:70px;top:3px" width="16" height="15"><path d="M1,4 C5,9 11,9 15,4 C11,12 5,12 1,4Z" fill="#222"/></svg>
<div class="t" style="left:92px;top:5px;font-size:10.5px;letter-spacing:-0.2px;color:#e2e2e2">Layer 1</div>
<div class="a" style="left:181px;top:0;width:1px;height:21px;background:#383838"></div>
<div class="a" style="left:186px;top:6px;width:9px;height:9px;border-radius:50%;border:1px solid #b8b8b8"></div>
<div class="a" style="left:209px;top:0;border-top:7px solid #e0e0e0;border-left:7px solid transparent"></div>
</div>
<div class="a" style="left:0;top:21px;width:216px;height:21px;background:#474747;border-bottom:1px solid #383838">
<div class="a" style="left:21px;top:0;width:1px;height:21px;background:#383838"></div>
<div class="a" style="left:42px;top:1px;width:4px;height:19px;background:#4c72e8"></div><div class="a" style="left:47px;top:0;width:1px;height:21px;background:#383838"></div>
<svg class="a" style="left:4px;top:6px" width="14" height="9"><path d="M0.5,4.5 C3,0.5 11,0.5 13.5,4.5 C11,8.5 3,8.5 0.5,4.5Z" fill="none" stroke="#c4c4c4" stroke-width="1.1"/><circle cx="7" cy="4.3" r="2.4" fill="#c4c4c4"/><circle cx="7.8" cy="3.6" r="0.8" fill="#555"/></svg>
<div class="a" style="left:69px;top:2px;width:18px;height:17px;background:#fff;border:1px solid #111"></div>
<div class="t" style="left:92px;top:5px;font-size:10.5px;letter-spacing:-0.2px;color:#e2e2e2">Layer 10</div>
<div class="a" style="left:181px;top:0;width:1px;height:21px;background:#383838"></div>
<div class="a" style="left:186px;top:6px;width:9px;height:9px;border-radius:50%;border:1px solid #b8b8b8"></div>
</div>
<div class="a" style="left:0;top:42px;width:216px;height:21px;background:#474747;border-bottom:1px solid #383838">
<div class="a" style="left:21px;top:0;width:1px;height:21px;background:#383838"></div>
<div class="a" style="left:42px;top:1px;width:4px;height:19px;background:#000"></div><div class="a" style="left:47px;top:0;width:1px;height:21px;background:#383838"></div>
<svg class="a" style="left:4px;top:6px" width="14" height="9"><path d="M0.5,4.5 C3,0.5 11,0.5 13.5,4.5 C11,8.5 3,8.5 0.5,4.5Z" fill="none" stroke="#c4c4c4" stroke-width="1.1"/><circle cx="7" cy="4.3" r="2.4" fill="#c4c4c4"/><circle cx="7.8" cy="3.6" r="0.8" fill="#555"/></svg>
<div class="a" style="left:69px;top:2px;width:18px;height:17px;background:#fff;border:1px solid #111"></div>
<div class="t" style="left:92px;top:5px;font-size:10.5px;letter-spacing:-0.2px;color:#e2e2e2">Layer 9</div>
<div class="a" style="left:181px;top:0;width:1px;height:21px;background:#383838"></div>
<div class="a" style="left:186px;top:6px;width:9px;height:9px;border-radius:50%;border:1px solid #b8b8b8"></div>
</div>
<div class="a" style="left:0;top:63px;width:216px;height:21px;background:#474747;border-bottom:1px solid #383838">
<div class="a" style="left:21px;top:0;width:1px;height:21px;background:#383838"></div>
<div class="a" style="left:42px;top:1px;width:4px;height:19px;background:#7f7f7f"></div><div class="a" style="left:47px;top:0;width:1px;height:21px;background:#383838"></div>
<svg class="a" style="left:4px;top:6px" width="14" height="9"><path d="M0.5,4.5 C3,0.5 11,0.5 13.5,4.5 C11,8.5 3,8.5 0.5,4.5Z" fill="none" stroke="#c4c4c4" stroke-width="1.1"/><circle cx="7" cy="4.3" r="2.4" fill="#c4c4c4"/><circle cx="7.8" cy="3.6" r="0.8" fill="#555"/></svg>
<div class="a" style="left:69px;top:2px;width:18px;height:17px;background:#fff;border:1px solid #111"></div>
<div class="t" style="left:92px;top:5px;font-size:10.5px;letter-spacing:-0.2px;color:#e2e2e2">Layer 8</div>
<div class="a" style="left:181px;top:0;width:1px;height:21px;background:#383838"></div>
<div class="a" style="left:186px;top:6px;width:9px;height:9px;border-radius:50%;border:1px solid #b8b8b8"></div>
</div>
<div class="a" style="left:0;top:84px;width:216px;height:21px;background:#474747;border-bottom:1px solid #383838">
<div class="a" style="left:21px;top:0;width:1px;height:21px;background:#383838"></div>
<div class="a" style="left:42px;top:1px;width:4px;height:19px;background:#f4ef1c"></div><div class="a" style="left:47px;top:0;width:1px;height:21px;background:#383838"></div>
<svg class="a" style="left:4px;top:6px" width="14" height="9"><path d="M0.5,4.5 C3,0.5 11,0.5 13.5,4.5 C11,8.5 3,8.5 0.5,4.5Z" fill="none" stroke="#c4c4c4" stroke-width="1.1"/><circle cx="7" cy="4.3" r="2.4" fill="#c4c4c4"/><circle cx="7.8" cy="3.6" r="0.8" fill="#555"/></svg>
<div class="a" style="left:69px;top:2px;width:18px;height:17px;background:#fff;border:1px solid #111"></div>
<div class="t" style="left:92px;top:5px;font-size:10.5px;letter-spacing:-0.2px;color:#e2e2e2">Layer 7</div>
<div class="a" style="left:181px;top:0;width:1px;height:21px;background:#383838"></div>
<div class="a" style="left:186px;top:6px;width:9px;height:9px;border-radius:50%;border:1px solid #b8b8b8"></div>
</div>
<div class="a" style="left:0;top:105px;width:216px;height:21px;background:#474747;border-bottom:1px solid #383838">
<div class="a" style="left:21px;top:0;width:1px;height:21px;background:#383838"></div>
<div class="a" style="left:42px;top:1px;width:4px;height:19px;background:#2de8f0"></div><div class="a" style="left:47px;top:0;width:1px;height:21px;background:#383838"></div>
<svg class="a" style="left:4px;top:6px" width="14" height="9"><path d="M0.5,4.5 C3,0.5 11,0.5 13.5,4.5 C11,8.5 3,8.5 0.5,4.5Z" fill="none" stroke="#c4c4c4" stroke-width="1.1"/><circle cx="7" cy="4.3" r="2.4" fill="#c4c4c4"/><circle cx="7.8" cy="3.6" r="0.8" fill="#555"/></svg>
<div class="a" style="left:69px;top:2px;width:18px;height:17px;background:#fff;border:1px solid #111"></div>
<div class="t" style="left:92px;top:5px;font-size:10.5px;letter-spacing:-0.2px;color:#e2e2e2">Layer 6</div>
<div class="a" style="left:181px;top:0;width:1px;height:21px;background:#383838"></div>
<div class="a" style="left:186px;top:6px;width:9px;height:9px;border-radius:50%;border:1px solid #b8b8b8"></div>
</div>
<div class="a" style="left:0;top:126px;width:216px;height:21px;background:#474747;border-bottom:1px solid #383838">
<div class="a" style="left:21px;top:0;width:1px;height:21px;background:#383838"></div>
<div class="a" style="left:42px;top:1px;width:4px;height:19px;background:#ef3fe0"></div><div class="a" style="left:47px;top:0;width:1px;height:21px;background:#383838"></div>
<svg class="a" style="left:4px;top:6px" width="14" height="9"><path d="M0.5,4.5 C3,0.5 11,0.5 13.5,4.5 C11,8.5 3,8.5 0.5,4.5Z" fill="none" stroke="#c4c4c4" stroke-width="1.1"/><circle cx="7" cy="4.3" r="2.4" fill="#c4c4c4"/><circle cx="7.8" cy="3.6" r="0.8" fill="#555"/></svg>
<div class="a" style="left:69px;top:2px;width:18px;height:17px;background:#fff;border:1px solid #111"></div>
<div class="t" style="left:92px;top:5px;font-size:10.5px;letter-spacing:-0.2px;color:#e2e2e2">Layer 5</div>
<div class="a" style="left:181px;top:0;width:1px;height:21px;background:#383838"></div>
<div class="a" style="left:186px;top:6px;width:9px;height:9px;border-radius:50%;border:1px solid #b8b8b8"></div>
</div>
<div class="a" style="left:0;top:147px;width:216px;height:21px;background:#474747;border-bottom:1px solid #383838">
<div class="a" style="left:21px;top:0;width:1px;height:21px;background:#383838"></div>
<div class="a" style="left:42px;top:1px;width:4px;height:19px;background:#4c5ee8"></div><div class="a" style="left:47px;top:0;width:1px;height:21px;background:#383838"></div>
<svg class="a" style="left:4px;top:6px" width="14" height="9"><path d="M0.5,4.5 C3,0.5 11,0.5 13.5,4.5 C11,8.5 3,8.5 0.5,4.5Z" fill="none" stroke="#c4c4c4" stroke-width="1.1"/><circle cx="7" cy="4.3" r="2.4" fill="#c4c4c4"/><circle cx="7.8" cy="3.6" r="0.8" fill="#555"/></svg>
<div class="a" style="left:69px;top:2px;width:18px;height:17px;background:#fff;border:1px solid #111"></div>
<div class="t" style="left:92px;top:5px;font-size:10.5px;letter-spacing:-0.2px;color:#e2e2e2">Layer 4</div>
<div class="a" style="left:181px;top:0;width:1px;height:21px;background:#383838"></div>
<div class="a" style="left:186px;top:6px;width:9px;height:9px;border-radius:50%;border:1px solid #b8b8b8"></div>
</div>
<div class="a" style="left:216px;top:0;width:13px;height:157px;background:#2d2d2d"></div>
<div class="a" style="left:219px;top:5px;border-left:4px solid transparent;border-right:4px solid transparent;border-bottom:5px solid #e0e0e0"></div>
<div class="a" style="left:217px;top:15px;width:11px;height:95px;background:#8e8e8e"></div>
<div class="a" style="left:219px;top:148px;border-left:4px solid transparent;border-right:4px solid transparent;border-top:5px solid #e0e0e0"></div>
</div>
<div class="t" style="left:1131px;top:263px;font-size:10px;color:#dcdcdc">10 La...</div>
<svg class="a" style="left:1215px;top:259px" width="150" height="18">
<g fill="none" stroke="#5e5e5e" stroke-width="1.5"><circle cx="14" cy="7" r="4"/><path d="M11,10 L7,14"/></g>
<rect x="32.5" y="3.5" width="8" height="8" fill="none" stroke="#cfcfcf"/><rect x="35.5" y="6.5" width="8" height="8" fill="#6a6a6a" stroke="#8a8a8a"/>
<path d="M58,5 H63 L61,3 M63,5 L61,7" fill="none" stroke="#cfcfcf" stroke-width="1.2"/><rect x="63" y="4" width="9" height="9" fill="#cfcfcf"/><rect x="58" y="8" width="5" height="5" fill="#474747"/>
<path d="M84,4 H96 V15 H87 V10 H84Z" fill="#cfcfcf"/><path d="M84,10 H88 V15" fill="#6a6a6a"/>
<g fill="none" stroke="#cfcfcf" stroke-width="1.2"><path d="M110,6 H123 M113,6 V4 H120 V6 M111.5,6 L112.5,15 H120.5 L121.5,6 M114.5,8V13 M116.5,8V13 M118.5,8V13"/></g>
<g fill="#6a6a6a"><rect x="140" y="14" width="1" height="1"/><rect x="142" y="12" width="1" height="1"/><rect x="142" y="14" width="1" height="1"/><rect x="138" y="14" width="1" height="1"/><rect x="140" y="12" width="1" height="1"/><rect x="142" y="10" width="1" height="1"/></g>
</svg>
<div class="a" style="left:1125px;top:277px;width:240px;height:3px;background:#2a2a2a"></div>
<div class="a" style="left:1125px;top:280px;width:240px;height:203px;background:#474747"></div>
<div class="a" style="left:1125px;top:280px;width:240px;height:18px;background:#393939"></div>
<div class="a" style="left:1125px;top:280px;width:59px;height:18px;background:transparent;border-right:1px solid #2c2c2c"><div class="t" style="left:7px;top:6px;font-size:10px;font-weight:bold;letter-spacing:-0.5px;color:#8f8f8f">Swatches</div></div><div class="a" style="left:1184px;top:280px;width:69px;height:18px;background:#474747;border-right:1px solid #2c2c2c"><div class="t" style="left:7px;top:6px;font-size:10px;font-weight:bold;letter-spacing:-0.5px;color:#dadada">Appearance</div></div>
<svg class="a" style="left:1346px;top:284px" width="16" height="11"><path d="M0,3 L5,3 L2.5,6Z" fill="#c8c8c8"/><rect x="6" y="0" width="9" height="1.5" fill="#c8c8c8"/><rect x="6" y="3.5" width="9" height="1.5" fill="#c8c8c8"/><rect x="6" y="7" width="9" height="1.5" fill="#c8c8c8"/></svg>
<div class="a" style="left:1130px;top:304px;width:230px;height:159px;background:#474747;border:1px solid #2e2e2e">
<div class="a" style="left:0;top:0;width:228px;height:25px;border-bottom:1px solid #383838"></div>
<div class="a" style="left:3px;top:3px;width:19px;height:19px;background:#fff;border:1px solid #333"></div>
<div class="t" style="left:47px;top:8px;font-size:10px;font-weight:bold;color:#e0e0e0">No Selection</div>
<div class="a" style="left:0;top:25px;width:228px;height:25px;border-bottom:1px solid #383838">
<div class="a" style="left:24px;top:0;width:1px;height:25px;background:#383838"></div>
<svg class="a" style="left:6px;top:8px" width="14" height="9"><path d="M0.5,4.5 C3,0.5 11,0.5 13.5,4.5 C11,8.5 3,8.5 0.5,4.5Z" fill="none" stroke="#c0c0c0" stroke-width="1.1"/><circle cx="7" cy="4.3" r="2.4" fill="#c0c0c0"/><circle cx="7.8" cy="3.6" r="0.8" fill="#555"/></svg>
<div class="a" style="left:30px;top:8px;border-top:5px solid transparent;border-bottom:5px solid transparent;border-left:6px solid #d8d8d8"></div>
<div class="t orange" style="left:47px;top:7px;font-size:10px;padding-bottom:1px">Stroke:</div>
<div class="a" style="left:90px;top:5px;width:17px;height:16px;background:#000;border:1px solid #e8e8e8;box-shadow:0 0 0 1px #000"></div>
<div class="t" style="left:122px;top:7px;font-size:10px;color:#e0e0e0">1 pt</div>
</div>
<div class="a" style="left:0;top:50px;width:228px;height:25px;border-bottom:1px solid #383838">
<div class="a" style="left:24px;top:0;width:1px;height:25px;background:#383838"></div>
<svg class="a" style="left:6px;top:8px" width="14" height="9"><path d="M0.5,4.5 C3,0.5 11,0.5 13.5,4.5 C11,8.5 3,8.5 0.5,4.5Z" fill="none" stroke="#c0c0c0" stroke-width="1.1"/><circle cx="7" cy="4.3" r="2.4" fill="#c0c0c0"/><circle cx="7.8" cy="3.6" r="0.8" fill="#555"/></svg>
<div class="a" style="left:30px;top:8px;border-top:5px solid transparent;border-bottom:5px solid transparent;border-left:6px solid #d8d8d8"></div>
<div class="t" style="left:47px;top:7px;font-size:10px;color:#e0e0e0">Fill:</div>
<div class="a" style="left:90px;top:5px;width:17px;height:16px;background:#fff;border:1px solid #111;box-shadow:inset 0 0 0 1px #fff"></div>
</div>
<div class="a" style="left:0;top:75px;width:228px;height:25px;border-bottom:1px solid #383838">
<div class="a" style="left:24px;top:0;width:1px;height:25px;background:#383838"></div>
<svg class="a" style="left:6px;top:8px" width="14" height="9"><path d="M0.5,4.5 C3,0.5 11,0.5 13.5,4.5 C11,8.5 3,8.5 0.5,4.5Z" fill="none" stroke="#5a5a5a" stroke-width="1.1"/><circle cx="7" cy="4.3" r="2.4" fill="#5a5a5a"/><circle cx="7.8" cy="3.6" r="0.8" fill="#555"/></svg>
<div class="t orange" style="left:47px;top:7px;font-size:10px;padding-bottom:1px">Opacity:</div>
<div class="t" style="left:89px;top:7px;font-size:10px;color:#e0e0e0">Default</div>
</div>
</div>
<svg class="a" style="left:1130px;top:463px" width="235" height="20">
<rect x="6.5" y="4.5" width="10" height="10" fill="none" stroke="#d0d0d0" stroke-width="2"/>
<rect x="31.5" y="4.5" width="10" height="10" fill="#9a9a9a" stroke="#d0d0d0" stroke-width="1.5"/>
<text x="55" y="15" font-size="12" font-style="italic" font-family="Liberation Serif" fill="#d0d0d0">fx</text><path d="M67,12 L71,12 L69,14Z" fill="#d0d0d0"/>
<circle cx="149" cy="9.5" r="4.5" fill="none" stroke="#d0d0d0" stroke-width="1.6"/><path d="M146,6.5 L152,12.5" stroke="#d0d0d0" stroke-width="1.6"/>
<path d="M171,5 H181 V15 H175 V10 H171Z" fill="#5c5c5c"/>
<g fill="none" stroke="#5c5c5c" stroke-width="1.2"><path d="M195,6 H208 M198,6 V4 H205 V6 M196.5,6 L197.5,15 H205.5 L206.5,6"/></g>
</svg>
<div class="a" style="left:1125px;top:483px;width:240px;height:2px;background:#2a2a2a"></div>
<div class="a" style="left:1125px;top:485px;width:240px;height:200px;background:#474747"></div>
<div class="a" style="left:1125px;top:485px;width:240px;height:17px;background:#393939"></div>
<div class="a" style="left:1125px;top:485px;width:77px;height:17px;background:transparent;border-right:1px solid #2c2c2c"><div class="t" style="left:7px;top:5px;font-size:10px;font-weight:bold;letter-spacing:-0.5px;color:#8f8f8f">Transparency</div></div><div class="a" style="left:1202px;top:485px;width:46px;height:17px;background:#474747;border-right:1px solid #2c2c2c"><svg class="a" style="left:5px;top:4px" width="6" height="10"><path d="M0.5,4 L3,1 L5.5,4 M0.5,6 L3,9 L5.5,6" fill="none" stroke="#d0d0d0" stroke-width="1.2"/></svg><div class="t" style="left:13px;top:5px;font-size:10px;font-weight:bold;letter-spacing:-0.5px;color:#dadada">Color</div></div>
<svg class="a" style="left:1346px;top:489px" width="16" height="11"><path d="M0,3 L5,3 L2.5,6Z" fill="#c8c8c8"/><rect x="6" y="0" width="9" height="1.5" fill="#c8c8c8"/><rect x="6" y="3.5" width="9" height="1.5" fill="#c8c8c8"/><rect x="6" y="7" width="9" height="1.5" fill="#c8c8c8"/></svg>
<svg class="a" style="left:1125px;top:502px" width="240" height="183">
<rect x="6.5" y="8.5" width="7" height="7" fill="#ddd" stroke="#111"/><rect x="9.5" y="11.5" width="7" height="7" fill="none" stroke="#ddd"/><rect x="10.5" y="12.5" width="5" height="5" fill="none" stroke="#111"/>
<path d="M26,8 L29,6 M26,8 L29,10 M26,8 H32 V14 M30,12 L32,15 L34,12" fill="none" stroke="#cfcfcf" stroke-width="1.1"/>
<rect x="15.5" y="35.5" width="18" height="18" fill="#000" stroke="#fff"/><rect x="19.5" y="39.5" width="10" height="10" fill="none" stroke="#fff"/>
<rect x="6" y="25" width="18" height="18" fill="#fff" stroke="#555" stroke-width="0.5"/>
<defs>
<linearGradient id="gc" x1="0" x2="1"><stop offset="0" stop-color="#fff"/><stop offset="1" stop-color="#00aeef"/></linearGradient>
<linearGradient id="gm" x1="0" x2="1"><stop offset="0" stop-color="#fff"/><stop offset="1" stop-color="#e5268a"/></linearGradient>
<linearGradient id="gy" x1="0" x2="1"><stop offset="0" stop-color="#fff"/><stop offset="1" stop-color="#fff200"/></linearGradient>
<linearGradient id="gk" x1="0" x2="1"><stop offset="0" stop-color="#fff"/><stop offset="1" stop-color="#231f20"/></linearGradient>
</defs>
<g font-family="Liberation Sans" font-size="10" font-weight="bold" fill="#cfcfcf">
<text x="52" y="23">C</text><text x="51" y="48">M</text><text x="52" y="73">Y</text><text x="52" y="98">K</text>
</g>
<g stroke="#222" stroke-width="1">
<rect x="70.5" y="14.5" width="102" height="6" fill="url(#gc)"/>
<rect x="70.5" y="39.5" width="102" height="6" fill="url(#gm)"/>
<rect x="70.5" y="64.5" width="102" height="6" fill="url(#gy)"/>
<rect x="70.5" y="89.5" width="102" height="6" fill="url(#gk)"/>
</g>
<g fill="#b4b4b4"><path d="M71,22 L75,26 V27 H67 V26Z"/><path d="M71,47 L75,51 V52 H67 V51Z"/><path d="M71,72 L75,76 V77 H67 V76Z"/><path d="M71,97 L75,101 V102 H67 V101Z"/></g>
<g fill="#a3a3a3" stroke="#333"><rect x="179.5" y="9.5" width="33" height="18"/><rect x="179.5" y="34.5" width="33" height="18"/><rect x="179.5" y="59.5" width="33" height="18"/><rect x="179.5" y="84.5" width="33" height="18"/></g>
<g font-family="Liberation Sans" font-size="10" fill="#111"><text x="183" y="23">0</text><text x="183" y="48">0</text><text x="183" y="73">0</text><text x="183" y="98">0</text></g>
<g font-family="Liberation Sans" font-size="11" fill="#d4d4d4"><text x="215" y="23">%</text><text x="215" y="48">%</text><text x="215" y="73">%</text><text x="215" y="98">%</text></g>
<rect x="6" y="114" width="13" height="13" fill="#fff"/><path d="M6,127 L19,114" stroke="#e0151b" stroke-width="2"/><rect x="19" y="114" width="13" height="13" fill="#000"/><rect x="32" y="114" width="13" height="13" fill="#fff"/>
</svg>
<div class="a" style="left:1131px;top:640px;width:217px;height:39px;background:linear-gradient(90deg,#ed1c24 0%,#f7941d 9%,#fff200 17%,#8dc63f 28%,#39b54a 38%,#00a99d 47%,#00aeef 54%,#2e3192 68%,#662d91 76%,#92278f 82%,#ec008c 91%,#ed1c24 100%);border:1px solid #222"><div class="a" style="left:0;top:0;width:100%;height:100%;background:linear-gradient(180deg,#fff 0%,rgba(255,255,255,.45) 18%,rgba(255,255,255,0) 42%,rgba(0,0,0,0) 50%,rgba(0,0,0,.55) 78%,#000 100%)"></div></div>
<div class="a" style="left:1125px;top:685px;width:240px;height:3px;background:#2a2a2a"></div>
<div class="a" style="left:1125px;top:688px;width:240px;height:17px;background:#393939"></div>
<div class="a" style="left:1125px;top:688px;width:108px;height:17px;background:#474747;border-right:1px solid #2c2c2c"><div class="t" style="left:7px;top:5px;font-size:10px;font-weight:bold;letter-spacing:-0.5px;color:#dadada">Separations Preview</div></div>
<div class="a" style="left:1125px;top:708px;width:240px;height:18px;background:#393939"></div>
<div class="a" style="left:1125px;top:708px;width:85px;height:18px;background:transparent;border-right:1px solid #2c2c2c"><div class="t" style="left:7px;top:6px;font-size:10px;font-weight:bold;letter-spacing:-0.5px;color:#8f8f8f">Document Info</div></div><div class="a" style="left:1210px;top:708px;width:68px;height:18px;background:#474747;border-right:1px solid #2c2c2c"><svg class="a" style="left:5px;top:5px" width="6" height="10"><path d="M0.5,4 L3,1 L5.5,4 M0.5,6 L3,9 L5.5,6" fill="none" stroke="#d0d0d0" stroke-width="1.2"/></svg><div class="t" style="left:13px;top:6px;font-size:10px;font-weight:bold;letter-spacing:-0.5px;color:#dadada">Attributes</div></div>
<svg class="a" style="left:1346px;top:712px" width="16" height="11"><path d="M0,3 L5,3 L2.5,6Z" fill="#c8c8c8"/><rect x="6" y="0" width="9" height="1.5" fill="#c8c8c8"/><rect x="6" y="3.5" width="9" height="1.5" fill="#c8c8c8"/><rect x="6" y="7" width="9" height="1.5" fill="#c8c8c8"/></svg>
<div class="a" style="left:1085px;top:726px;width:280px;height:3px;background:#1c2730"></div>
<!--/RIGHT DOCK-->
<!--BRUSH-->
<div class="a" style="left:823px;top:86px;width:242px;height:274px;background:#474747;border:1px solid #2a2a2a"></div>
<div class="a" style="left:824px;top:87px;width:240px;height:12px;background:#2f2f2f"></div>
<svg class="a" style="left:1037px;top:89px" width="26" height="8"><path d="M4,0.5 L0.5,4 L4,7.5Z M8.5,0.5 L5,4 L8.5,7.5Z" fill="#c4c4c4"/><path d="M16,1 L22,7 M22,1 L16,7" stroke="#c4c4c4" stroke-width="1.6"/></svg>
<div class="a" style="left:824px;top:99px;width:240px;height:17px;background:#393939"></div>
<div class="a" style="left:824px;top:99px;width:50px;height:17px;background:#474747;border-right:1px solid #2c2c2c"><div class="t" style="left:7px;top:4px;font-size:10px;font-weight:bold;letter-spacing:-0.5px;color:#dadada">Brushes</div></div><div class="a" style="left:874px;top:99px;width:54px;height:17px;background:transparent;border-right:1px solid #2c2c2c"><div class="t" style="left:7px;top:4px;font-size:10px;font-weight:bold;letter-spacing:-0.5px;color:#8f8f8f">Symbols</div></div><div class="a" style="left:928px;top:99px;width:82px;height:17px;background:transparent;border-right:1px solid #2c2c2c"><div class="t" style="left:7px;top:4px;font-size:10px;font-weight:bold;letter-spacing:-0.5px;color:#8f8f8f">Graphic Styles</div></div>
<svg class="a" style="left:1045px;top:103px" width="16" height="11"><path d="M0,3 L5,3 L2.5,6Z" fill="#c8c8c8"/><rect x="6" y="0" width="9" height="1.5" fill="#c8c8c8"/><rect x="6" y="3.5" width="9" height="1.5" fill="#c8c8c8"/><rect x="6" y="7" width="9" height="1.5" fill="#c8c8c8"/></svg>
<div class="a" style="left:829px;top:122px;width:231px;height:209px;background:#4a4a4a;border:1px solid #2e2e2e;overflow:hidden">
<div class="a" style="left:0px;top:0;width:32px;height:32px;background:#e8e8e8"><div class="a" style="left:13px;top:13px;width:6px;height:6px;border-radius:50%;background:#000"></div></div>
<div class="a" style="left:33px;top:0;width:32px;height:32px;background:#e8e8e8"><div class="a" style="left:7px;top:7px;width:17px;height:17px;border-radius:50%;background:#000"></div></div>
<div class="a" style="left:66px;top:0;width:32px;height:32px;background:#e8e8e8"><div class="a" style="left:14px;top:15px;width:3px;height:2px;background:#000"></div></div>
<div class="a" style="left:99px;top:0;width:32px;height:32px;background:#e8e8e8"><div class="a" style="left:12px;top:14px;width:7px;height:4px;border-radius:50%;background:#000;transform:rotate(15deg)"></div></div>
<div class="a" style="left:132px;top:0;width:32px;height:32px;background:#e8e8e8"><div class="a" style="left:15px;top:12px;width:1px;height:9px;background:#555"></div></div>
<div class="a" style="left:0;top:33px;width:214px;height:32px;background:#e8e8e8"></div>
<div class="a" style="left:0;top:66px;width:214px;height:32px;background:#e8e8e8"></div>
<div class="a" style="left:0;top:99px;width:214px;height:32px;background:#e8e8e8"></div>
<div class="a" style="left:0;top:132px;width:214px;height:32px;background:#e8e8e8"></div>
<div class="a" style="left:0;top:165px;width:214px;height:32px;background:#e8e8e8"></div>
<div class="a" style="left:0;top:198px;width:214px;height:32px;background:#e8e8e8"></div>
<div class="a" style="left:6px;top:49px;width:30px;height:2px;background:#111"></div>
<svg class="a" style="left:0;top:66px" width="214" height="146"><path d="M8,17 C14,15 20,18 26,16" stroke="#111" stroke-width="3" fill="none"/><path d="M10,47 C14,40 20,44 23,43" stroke="#e07030" stroke-width="1" fill="none"/><path d="M14,52 H30" stroke="#e07030" stroke-width="0.8"/><path d="M12,78 C60,75 140,79 206,76 L207,89 C150,92 80,88 14,91Z" fill="#111"/><path d="M40,84 L90,85 M110,86 L150,84 M160,82 L185,83" stroke="#d8d8d8" stroke-width="1.2"/><path d="M8,72 C12,66 22,67 28,71 L22,77 L9,77Z" fill="#111"/><ellipse cx="13" cy="93" rx="5" ry="2.5" fill="#111"/><path d="M50,108 C110,103 170,105 208,113 C170,121 110,123 50,118Z" fill="#111"/><g stroke="#111" fill="none"><path d="M8,112 L200,113" stroke-width="1.5"/><path d="M20,105 L150,107" stroke-width="1.5"/><path d="M70,100 L195,109" stroke-width="2.5"/><path d="M30,119 L200,114" stroke-width="1.5"/><path d="M90,125 L175,117" stroke-width="1.5"/><path d="M12,116 L110,116" stroke-width="1"/></g><g stroke="#111" fill="none" stroke-width="0.8"><path d="M145,142 C165,135 185,134 205,141"/><path d="M150,142 C170,137 188,136 200,142"/><path d="M160,141 C175,138 190,138 198,141"/></g></svg>
<div class="a" style="left:215px;top:0;width:14px;height:208px;background:#2d2d2d"></div>
<div class="a" style="left:218px;top:5px;border-left:4px solid transparent;border-right:4px solid transparent;border-bottom:5px solid #e0e0e0"></div>
<div class="a" style="left:216px;top:17px;width:12px;height:100px;background:#8e8e8e"></div>
<div class="a" style="left:218px;top:199px;border-left:4px solid transparent;border-right:4px solid transparent;border-top:5px solid #e0e0e0"></div>
</div>
<svg class="a" style="left:829px;top:332px" width="236" height="20">
<g fill="#cfcfcf"><rect x="4" y="4" width="2" height="10"/><rect x="7" y="4" width="2" height="10"/><path d="M10,4 L13,4 L17,14 L14,14Z"/><path d="M15,12 H19 L17,14Z"/></g>
<g stroke="#5e5e5e" stroke-width="1.3"><path d="M118,4 L128,14 M128,4 L118,14"/></g>
<rect x="143.5" y="4.5" width="10" height="10" fill="none" stroke="#5e5e5e"/><path d="M145,7.5H152 M145,10H152 M145,12.5H152" stroke="#5e5e5e"/>
<path d="M168,4 H180 V15 H171 V10 H168Z" fill="#cfcfcf"/>
<g fill="none" stroke="#5e5e5e" stroke-width="1.2"><path d="M194,6 H207 M197,6 V4 H204 V6 M195.5,6 L196.5,15 H204.5 L205.5,6"/></g>
<g fill="#777"><rect x="230" y="16" width="1" height="1"/><rect x="228" y="16" width="1" height="1"/><rect x="230" y="14" width="1" height="1"/><rect x="226" y="16" width="1" height="1"/><rect x="228" y="14" width="1" height="1"/><rect x="230" y="12" width="1" height="1"/></g>
</svg>
<div class="a" style="left:824px;top:351px;width:240px;height:1px;background:#333"></div>
<div class="grip" style="left:935px;top:354px;width:17px;height:4px;background:repeating-linear-gradient(90deg,#121212 0 1px,transparent 1px 2px)"></div>
<div class="a" style="left:852px;top:143px;width:232px;height:128px;background:#474747;border:1px solid #2a2a2a;box-shadow:1px 1px 2px rgba(0,0,0,.3)"></div>
<div class="a" style="left:853px;top:144px;width:230px;height:20px;background:#373737"></div>
<div class="a" style="left:853px;top:146px;width:62px;height:18px;background:transparent;border-right:1px solid #2c2c2c"><div class="t" style="left:7px;top:5px;font-size:10px;font-weight:bold;letter-spacing:-0.5px;color:#8f8f8f">Transform</div></div><div class="a" style="left:915px;top:146px;width:40px;height:18px;background:transparent;border-right:1px solid #2c2c2c"><div class="t" style="left:7px;top:5px;font-size:10px;font-weight:bold;letter-spacing:-0.5px;color:#8f8f8f">Align</div></div><div class="a" style="left:955px;top:146px;width:62px;height:18px;background:#474747;border-right:1px solid #2c2c2c"><div class="t" style="left:7px;top:5px;font-size:10px;font-weight:bold;letter-spacing:-0.5px;color:#dadada">Pathfinder</div></div>
<svg class="a" style="left:1041px;top:151px" width="12" height="8"><path d="M0.5,0.5 L4,4 L0.5,7.5Z M5.5,0.5 L9,4 L5.5,7.5Z" fill="#c4c4c4"/></svg>
<div class="a" style="left:1058px;top:148px;width:2px;height:13px;background:#2a2a2a;border-right:1px solid #555"></div>
<svg class="a" style="left:1065px;top:150px" width="16" height="11"><path d="M0,3 L5,3 L2.5,6Z" fill="#c8c8c8"/><rect x="6" y="0" width="9" height="1.5" fill="#c8c8c8"/><rect x="6" y="3.5" width="9" height="1.5" fill="#c8c8c8"/><rect x="6" y="7" width="9" height="1.5" fill="#c8c8c8"/></svg>
<div class="t" style="left:858px;top:172px;font-size:10px;color:#dcdcdc">Shape Modes:</div>
<div class="t" style="left:858px;top:222px;font-size:10px;color:#dcdcdc">Pathfinders:</div>
<div class="a" style="left:1002px;top:192px;width:75px;height:19px;background:#474747;border:1px solid #393939;box-shadow:inset 0 0 0 1px #525252"><div class="t" style="left:19px;top:5px;font-size:10px;color:#6e6e6e">Expand</div></div>
<svg class="a" style="left:852px;top:180px" width="232" height="90">
<g stroke="#cfcfcf" stroke-width="1">
<rect x="12.5" y="15.5" width="9" height="9" fill="#8e8e8e"/><rect x="16.5" y="19.5" width="9" height="9" fill="#8e8e8e"/>
<rect x="47.5" y="15.5" width="9" height="9" fill="#474747"/><rect x="51.5" y="19.5" width="9" height="9" fill="#474747" stroke="#6a6a6a"/><path d="M47.5,15.5 H56.5 V19.5 H51.5 V24.5 H47.5Z" fill="#8e8e8e"/>
<rect x="83.5" y="15.5" width="9" height="9" fill="none"/><rect x="87.5" y="19.5" width="9" height="9" fill="none"/><rect x="87.5" y="19.5" width="5" height="5" fill="#8e8e8e"/>
<rect x="119.5" y="15.5" width="9" height="9" fill="#8e8e8e"/><rect x="123.5" y="19.5" width="9" height="9" fill="#8e8e8e"/><rect x="123.5" y="19.5" width="5" height="5" fill="#474747"/>
</g>
<g stroke="#cfcfcf" stroke-width="1" fill="none">
<rect x="15.5" y="65.5" width="6" height="6"/><rect x="18.5" y="68.5" width="6" height="6" fill="#777"/><rect x="21.5" y="71.5" width="6" height="6"/>
</g>
<g fill="#c4c4c4"><path d="M52,65 H58 V68 H55 V71 H52Z"/><path d="M59,68 H63 V72 H59Z M56,72 H59 V75 H56Z"/><path d="M56,75 H66 V79 H52 V75Z" fill="#aaa"/><path d="M63,72 H66 V75 H63Z"/></g>
<g><rect x="89" y="65" width="10" height="10" fill="#b8b8b8"/><path d="M99,70 H104 V80 H94 V75 H99Z" fill="#9a9a9a"/></g>
<g><rect x="127" y="65" width="14" height="14" fill="#5a5a5a"/><rect x="131" y="69" width="7" height="7" fill="#b0b0b0"/></g>
<g stroke="#cfcfcf" fill="none"><rect x="164.5" y="65.5" width="9" height="9"/><rect x="169.5" y="70.5" width="9" height="9"/><rect x="168.5" y="69.5" width="4" height="4" fill="#474747"/></g>
<g><rect x="201.5" y="65.5" width="9" height="9" fill="#5a5a5a" stroke="#777"/><path d="M205,69 H215 V79 H205Z" fill="#a0a0a0"/><rect x="205.5" y="69.5" width="5" height="5" fill="#474747" stroke="#888"/></g>
</svg>
<!--/BRUSH-->
</body></html>
